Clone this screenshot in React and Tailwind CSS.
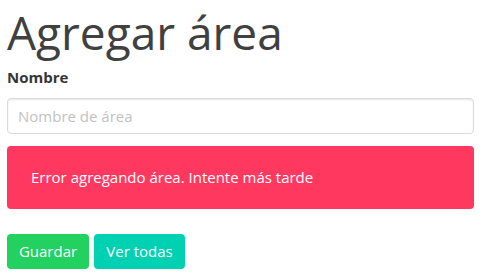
const App = () => {
  return (
    <div className="h-[275px] bg-white pl-[7px] pr-[10px] font-['Open_Sans',sans-serif]">
      <h1 className="text-[46px] leading-[64px] font-normal text-[#404040]">Agregar área</h1>

      <label className="block mt-px text-[15px] leading-6 font-bold text-[#363636]">Nombre</label>

      <input
        type="text"
        placeholder="Nombre de área"
        className="mt-[9px] block w-full h-9 px-[10px] text-[15px] border border-[#dbdbdb] rounded bg-white shadow-[inset_0_1px_2px_rgba(10,10,10,0.1)] placeholder:text-[#c2c2c2] outline-none"
      />

      <div className="mt-3 rounded bg-[#ff3860] text-white pl-6 py-5 text-[15px] leading-[23px]">
        Error agregando área. Intente más tarde
      </div>

      <div className="mt-[25px] flex gap-[5px]">
        <button className="h-[35px] w-[82px] rounded bg-[#23d160] text-white text-[15px] flex items-center justify-center">Guardar</button>
        <button className="h-[35px] w-[91px] rounded bg-[#00d1b2] text-white text-[15px] flex items-center justify-center">Ver todas</button>
      </div>
    </div>
  )
}

export default App
